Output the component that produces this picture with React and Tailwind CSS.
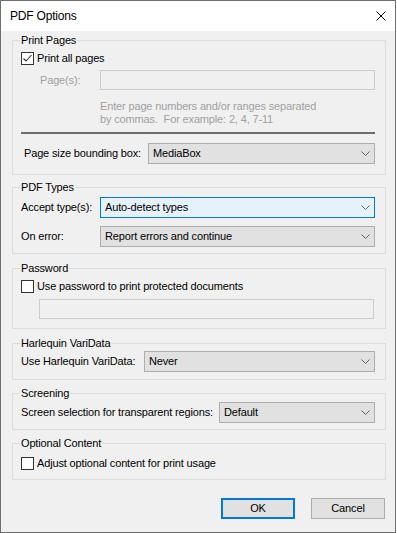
import React from "react";

const FONT = { fontFamily: '"Liberation Sans", Arial, sans-serif' };

const Chevron = () => (
  <svg width="9" height="5" viewBox="0 0 9 5" className="shrink-0">
    <path d="M0.5 0.5 L4.5 4.5 L8.5 0.5" fill="none" stroke="#606060" strokeWidth="1" />
  </svg>
);

const Select = ({ value, focused = false, className = "" }) => (
  <div
    className={`flex h-[21px] items-center justify-between pl-[4px] pr-[4px] border ${
      focused ? "border-[#0078d7] bg-[#e5f1fb]" : "border-[#adadad] bg-[#e1e1e1]"
    } ${className}`}
  >
    <span className="leading-[13px] whitespace-nowrap">{value}</span>
    <Chevron />
  </div>
);

const Checkbox = ({ checked = false, label }) => (
  <div className="flex h-[13px] items-center gap-[3px]">
    <div className="h-[13px] w-[13px] shrink-0 border border-[#333333] bg-white">
      {checked && (
        <svg width="11" height="11" viewBox="0 0 11 11">
          <path d="M1.5 5.5 L4 8 L9.5 2" fill="none" stroke="#333333" strokeWidth="1.1" />
        </svg>
      )}
    </div>
    <span className="leading-[13px] whitespace-nowrap">{label}</span>
  </div>
);

const Group = ({ title, className = "", children }) => (
  <fieldset className={`w-[374px] border border-[#dcdcdc] pl-[8px] pr-[10px] ${className}`}>
    <legend className="-ml-px px-px leading-[14px]">{title}</legend>
    {children}
  </fieldset>
);

export default function App() {
  return (
    <div
      className="flex h-[533px] w-[396px] flex-col border border-[#707070] bg-[#f0f0f0] text-[11px] tracking-[-0.15px] text-black"
      style={FONT}
    >
      {/* Title bar */}
      <div className="flex h-[30px] items-center justify-between bg-white pl-[9px] pr-[9px]">
        <span className="text-[12px] tracking-[-0.2px]">PDF Options</span>
        <svg width="10" height="10" viewBox="0 0 10 10">
          <path d="M0.5 0.5 L9.5 9.5 M9.5 0.5 L0.5 9.5" stroke="#000" strokeWidth="1" />
        </svg>
      </div>

      {/* Client area */}
      <div className="flex flex-col pl-[11px] pt-[2px]">
        <Group title="Print Pages" className="pb-[10px]">
          <div className="mt-[5px]">
            <Checkbox checked label="Print all pages" />
          </div>
          <div className="mt-[5px] flex items-center">
            <span className="w-[79px] shrink-0 pl-[19px] text-[#a0a0a0]">Page(s):</span>
            <div className="h-[20px] flex-1 border border-[#cccccc] bg-[#f0f0f0]" />
          </div>
          <div className="mt-[10px] pl-[79px] leading-[13px] text-[#a0a0a0]">
            <div>Enter page numbers and/or ranges separated</div>
            <div>by commas.&nbsp; For example: 2, 4, 7-11</div>
          </div>
          <div className="mt-[6px] h-[2px] bg-[#6d6d6d]" />
          <div className="mt-[9px] flex items-center">
            <span className="w-[127px] shrink-0 whitespace-nowrap pl-[3px]">Page size bounding box:</span>
            <Select value="MediaBox" className="flex-1" />
          </div>
        </Group>

        <Group title="PDF Types" className="mt-[5px] pb-[6px]">
          <div className="mt-[3px] flex items-center">
            <span className="w-[79px] shrink-0 whitespace-nowrap">Accept type(s):</span>
            <Select value="Auto-detect types" focused className="flex-1" />
          </div>
          <div className="mt-[8px] flex items-center">
            <span className="w-[79px] shrink-0">On error:</span>
            <Select value="Report errors and continue" className="flex-1" />
          </div>
        </Group>

        <Group title="Password" className="mt-[7px] pb-[9px]">
          <div className="mt-[5px]">
            <Checkbox label="Use password to print protected documents" />
          </div>
          <div className="ml-[18px] mr-[1px] mt-[6px] h-[20px] border border-[#cccccc] bg-[#f0f0f0]" />
        </Group>

        <Group title="Harlequin VariData" className="mt-[7px] pb-[7px]">
          <div className="mt-[1px] flex items-center">
            <span className="w-[123px] shrink-0 whitespace-nowrap">Use Harlequin VariData:</span>
            <Select value="Never" className="flex-1" />
          </div>
        </Group>

        <Group title="Screening" className="mt-[6px] pb-[6px]">
          <div className="mt-[2px] flex items-center">
            <span className="flex-1 whitespace-nowrap">Screen selection for transparent regions:</span>
            <Select value="Default" className="w-[156px] shrink-0" />
          </div>
        </Group>

        <Group title="Optional Content" className="mt-[6px] pb-[9px]">
          <div className="mt-[7px]">
            <Checkbox label="Adjust optional content for print usage" />
          </div>
        </Group>

        <div className="mt-[18px] flex justify-end gap-[16px] pr-[10px]">
          <button className="h-[21px] w-[74px] border-2 border-[#0078d7] bg-[#e1e1e1] leading-[13px]">
            OK
          </button>
          <button className="h-[21px] w-[74px] border border-[#adadad] bg-[#e1e1e1] leading-[13px]">
            Cancel
          </button>
        </div>
      </div>
    </div>
  );
}
